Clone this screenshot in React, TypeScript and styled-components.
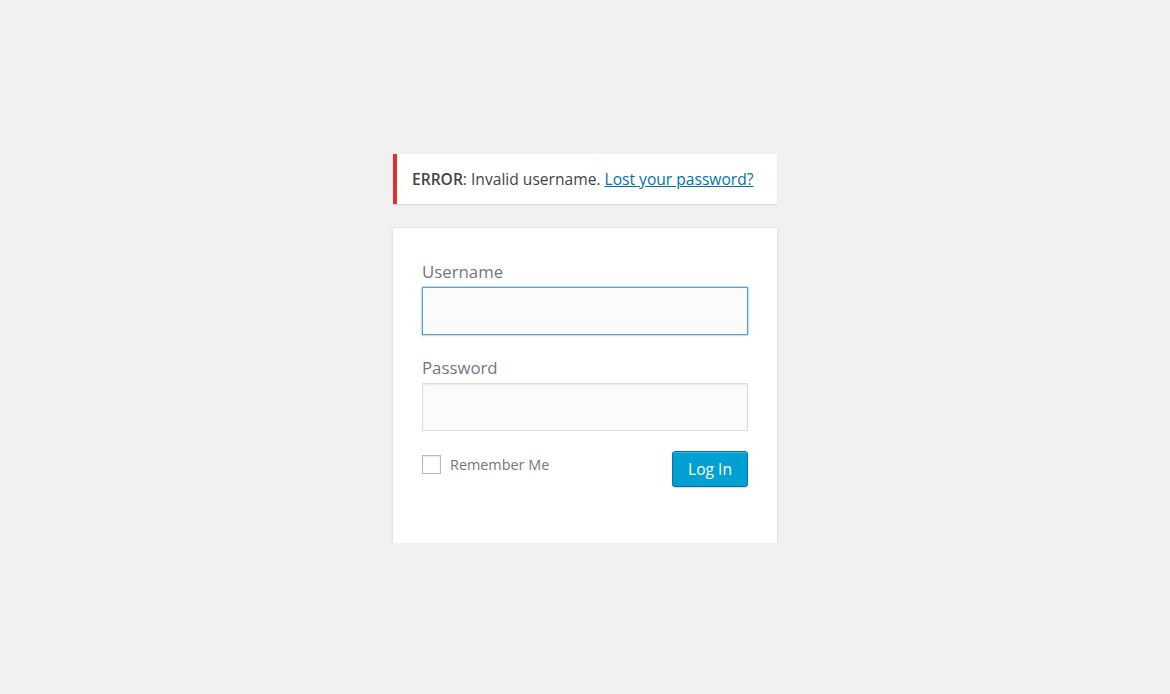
import React from "react";
import styled, { createGlobalStyle } from "styled-components";

const GlobalStyle = createGlobalStyle`
  html, body {
    margin: 0;
    padding: 0;
    background: #f1f1f1;
    font-family: "Open Sans", "Noto Sans", sans-serif;
    color: #444;
  }
  * { box-sizing: border-box; }
`;

const Login = styled.div`
  width: 384px;
  margin: 0 auto;
  padding-top: 154px;
`;

const Notice = styled.div`
  background: #fff;
  border-left: 4px solid #dc3232;
  box-shadow: 0 1px 1px rgba(0, 0, 0, 0.1);
  padding: 13px 15px;
  font-size: 15.6px;
  line-height: 24px;
  color: #444;

  strong {
    font-weight: 600;
  }

  a {
    color: #0073aa;
    text-decoration: underline;
  }
`;

const Form = styled.form`
  margin-top: 24px;
  background: #fff;
  box-shadow: 0 1px 3px rgba(0, 0, 0, 0.13);
  padding: 31px 29px 56px;
`;

const Label = styled.label`
  display: block;
  font-size: 16.8px;
  line-height: 25px;
  color: #72777c;
`;

const Input = styled.input<{ $focused?: boolean }>`
  display: block;
  width: 100%;
  height: 48px;
  margin: 3px 0 20px;
  padding: 4px 6px;
  font-size: 20px;
  font-family: inherit;
  background: #fbfbfb;
  border: 1px solid ${(p) => (p.$focused ? "#5b9dd9" : "#ddd")};
  box-shadow: ${(p) =>
    p.$focused ? "0 0 2px rgba(30, 140, 190, 0.8)" : "inset 0 1px 2px rgba(0, 0, 0, 0.07)"};
  outline: none;
`;

const Row = styled.div`
  display: flex;
  justify-content: space-between;
  align-items: flex-start;
`;

const Remember = styled.label`
  display: flex;
  align-items: center;
  gap: 9px;
  margin-top: 4px;
  font-size: 14.4px;
  color: #72777c;
  line-height: 19px;
`;

const Box = styled.span`
  display: inline-block;
  width: 19px;
  height: 19px;
  border: 1px solid #b4b9be;
  background: #fff;
  box-shadow: inset 0 1px 2px rgba(0, 0, 0, 0.1);
`;

const Button = styled.button`
  height: 36px;
  padding: 0 15px;
  font-family: inherit;
  font-size: 15.6px;
  color: #fff;
  background: #00a0d2;
  border: 1px solid #0073aa;
  border-radius: 3px;
  box-shadow: inset 0 1px 0 rgba(120, 200, 230, 0.5), 0 1px 0 rgba(0, 0, 0, 0.15);
  cursor: pointer;
`;

export default function App() {
  return (
    <>
      <GlobalStyle />
      <Login>
        <Notice>
          <strong>ERROR</strong>: Invalid username. <a href="#">Lost your password?</a>
        </Notice>
        <Form onSubmit={(e) => e.preventDefault()}>
          <Label>Username</Label>
          <Input type="text" $focused />
          <Label>Password</Label>
          <Input type="password" />
          <Row>
            <Remember>
              <Box />
              Remember Me
            </Remember>
            <Button type="submit">Log In</Button>
          </Row>
        </Form>
      </Login>
    </>
  );
}
